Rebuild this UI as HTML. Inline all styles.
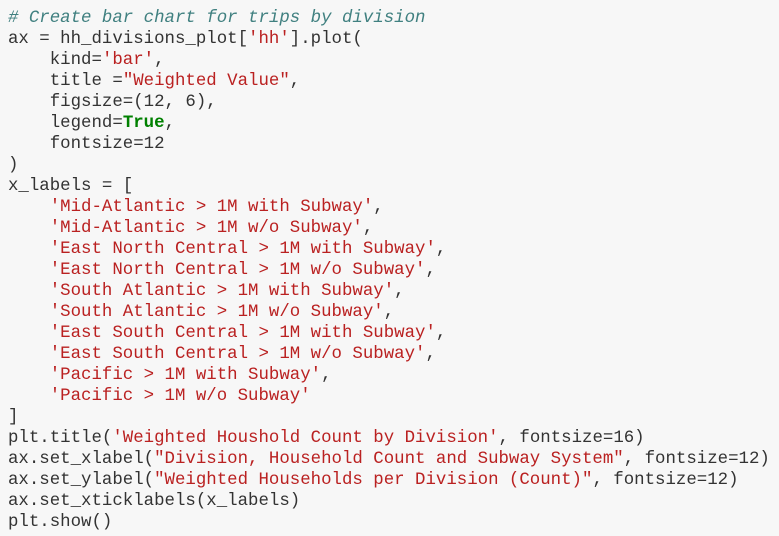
<!DOCTYPE html>
<html><head><style>
html,body{margin:0;padding:0;background:#f7f7f7;width:779px;height:536px;overflow:hidden}
pre{margin:0;position:absolute;left:8px;top:8px;font-family:"Liberation Mono",monospace;font-size:17.4px;line-height:21px;color:#333}
.c{color:#408080;font-style:italic}
.s{color:#ba2121}
.k{color:#008000;font-weight:bold}
</style></head><body>
<pre><span class="c"># Create bar chart for trips by division</span>
ax = hh_divisions_plot[<span class="s">'hh'</span>].plot(
    kind=<span class="s">'bar'</span>,
    title =<span class="s">"Weighted Value"</span>,
    figsize=(12, 6),
    legend=<span class="k">True</span>,
    fontsize=12
)
x_labels = [
    <span class="s">'Mid-Atlantic &gt; 1M with Subway'</span>,
    <span class="s">'Mid-Atlantic &gt; 1M w/o Subway'</span>,
    <span class="s">'East North Central &gt; 1M with Subway'</span>,
    <span class="s">'East North Central &gt; 1M w/o Subway'</span>,
    <span class="s">'South Atlantic &gt; 1M with Subway'</span>,
    <span class="s">'South Atlantic &gt; 1M w/o Subway'</span>,
    <span class="s">'East South Central &gt; 1M with Subway'</span>,
    <span class="s">'East South Central &gt; 1M w/o Subway'</span>,
    <span class="s">'Pacific &gt; 1M with Subway'</span>,
    <span class="s">'Pacific &gt; 1M w/o Subway'</span>
]
plt.title(<span class="s">'Weighted Houshold Count by Division'</span>, fontsize=16)
ax.set_xlabel(<span class="s">"Division, Household Count and Subway System"</span>, fontsize=12)
ax.set_ylabel(<span class="s">"Weighted Households per Division (Count)"</span>, fontsize=12)
ax.set_xticklabels(x_labels)
plt.show()</pre>
</body></html>
